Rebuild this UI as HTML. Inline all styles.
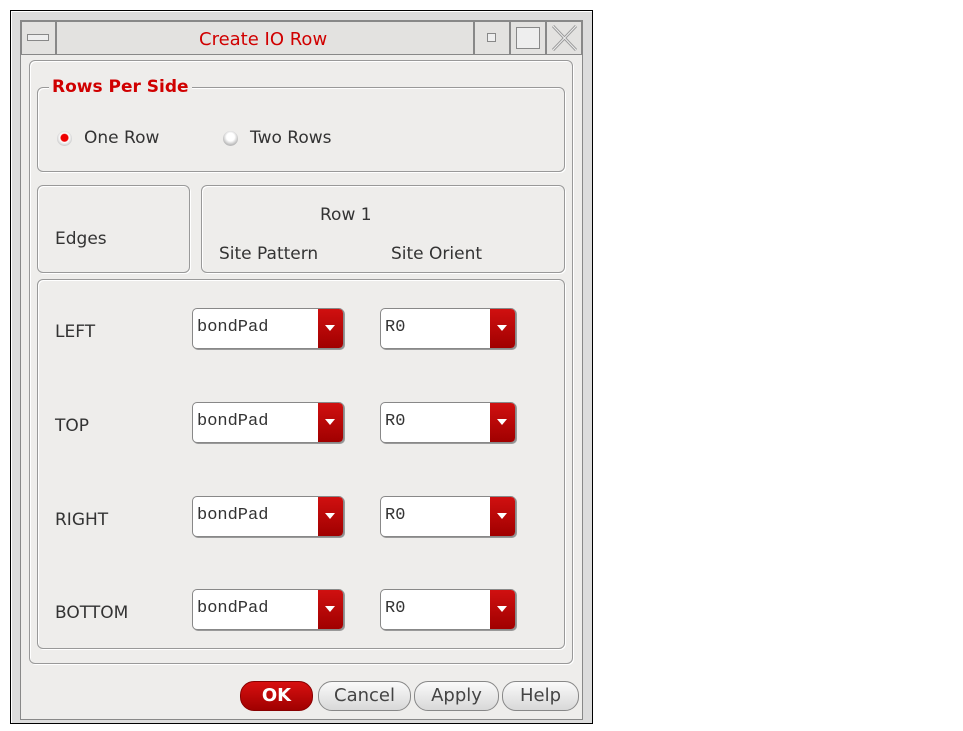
<!DOCTYPE html>
<html><head><style>
body{margin:0;width:963px;height:731px;background:#fff;position:relative;font-family:"DejaVu Sans","Liberation Sans",sans-serif;overflow:hidden}
.a{position:absolute;box-sizing:border-box}
.frame{left:10px;top:10px;width:583px;height:714px;border:1px solid #000;background:#dcdcdc;box-shadow:inset 1px 1px 0 #fff}
.win{left:20px;top:20px;width:563px;height:700px;border:1px solid #888;background:#eeedeb}
.tb{top:21px;height:34px;border:1px solid #888;background:#e3e2e0}
.box{border:1px solid #999;border-radius:6px;box-shadow:1px 1px 0 #fff, inset 1px 1px 0 #fff}
.t{position:absolute;font-size:17px;color:#333;white-space:nowrap}
.dd{position:absolute;box-sizing:border-box;height:41px;border:1px solid #888;border-radius:5px;background:#fff;box-shadow:1px 1px 0 #999;overflow:hidden}
.dd span{position:absolute;left:4px;top:9px;font-family:"Liberation Mono",monospace;font-size:17px;color:#333}
.dd i{position:absolute;right:0;top:0;width:25px;height:100%;background:linear-gradient(#d01010,#a00000)}
.dd i:after{content:"";position:absolute;left:7px;top:16px;border-left:5px solid transparent;border-right:5px solid transparent;border-top:6px solid #fff}
.btn{position:absolute;box-sizing:border-box;top:681px;height:30px;border:1px solid #888;border-radius:14px;background:linear-gradient(#fafafa,#d8d8d8);font-size:18px;color:#444;text-align:center;line-height:27px}
</style></head><body>
<div class="a frame"></div>
<div class="a win"></div>
<div class="a tb" style="left:21px;width:35px"></div>
<div class="a" style="left:27px;top:34px;width:22px;height:7px;border:1px solid #888;background:#eee"></div>
<div class="a tb" style="left:56px;width:418px"></div>
<div class="t" style="left:199px;top:29px;color:#d00000;font-size:18px">Create IO Row</div>
<div class="a tb" style="left:474px;width:36px"></div>
<div class="a" style="left:487px;top:33px;width:9px;height:9px;border:1px solid #888;background:#eee"></div>
<div class="a tb" style="left:510px;width:36px"></div>
<div class="a" style="left:516px;top:27px;width:24px;height:22px;border:1px solid #888;background:#eee"></div>
<div class="a tb" style="left:546px;width:36px"></div>
<svg class="a" style="left:546px;top:21px" width="36" height="34"><path d="M7 5L30 29M30 5L7 29" stroke="#999" stroke-width="3"/><path d="M7 5L30 29M30 5L7 29" stroke="#eee" stroke-width="1"/></svg>
<div class="a box" style="left:29px;top:60px;width:544px;height:604px"></div>
<div class="a box" style="left:37px;top:87px;width:528px;height:85px"></div>
<div class="t" style="left:49px;top:77px;color:#d00000;font-weight:bold;background:#eeedeb;padding:0 3px;font-size:17px">Rows Per Side</div>
<div class="a" style="left:57px;top:131px;width:15px;height:15px;border-radius:50%;background:radial-gradient(circle at 50% 45%,#e00 0 3.5px,#fff 4.5px,#ccc 8px)"></div>
<div class="t" style="left:84px;top:128px">One Row</div>
<div class="a" style="left:223px;top:131px;width:15px;height:15px;border-radius:50%;background:radial-gradient(circle at 50% 40%,#fff 0 4px,#bbb 8px)"></div>
<div class="t" style="left:250px;top:128px">Two Rows</div>
<div class="a box" style="left:37px;top:185px;width:153px;height:88px"></div>
<div class="t" style="left:55px;top:229px">Edges</div>
<div class="a box" style="left:201px;top:185px;width:364px;height:88px"></div>
<div class="t" style="left:320px;top:205px">Row 1</div>
<div class="t" style="left:219px;top:244px">Site Pattern</div>
<div class="t" style="left:391px;top:244px">Site Orient</div>
<div class="a box" style="left:37px;top:279px;width:528px;height:370px"></div>
<div class="t" style="left:55px;top:322px">LEFT</div>
<div class="t" style="left:55px;top:416px">TOP</div>
<div class="t" style="left:55px;top:510px">RIGHT</div>
<div class="t" style="left:55px;top:603px">BOTTOM</div>
<div class="dd" style="left:192px;top:308px;width:152px"><span>bondPad</span><i></i></div>
<div class="dd" style="left:380px;top:308px;width:136px"><span>R0</span><i></i></div>
<div class="dd" style="left:192px;top:402px;width:152px"><span>bondPad</span><i></i></div>
<div class="dd" style="left:380px;top:402px;width:136px"><span>R0</span><i></i></div>
<div class="dd" style="left:192px;top:496px;width:152px"><span>bondPad</span><i></i></div>
<div class="dd" style="left:380px;top:496px;width:136px"><span>R0</span><i></i></div>
<div class="dd" style="left:192px;top:589px;width:152px"><span>bondPad</span><i></i></div>
<div class="dd" style="left:380px;top:589px;width:136px"><span>R0</span><i></i></div>
<div class="btn" style="left:240px;width:73px;background:linear-gradient(#d81010,#a00000);color:#fff;font-weight:bold;border-color:#800">OK</div>
<div class="btn" style="left:318px;width:93px">Cancel</div>
<div class="btn" style="left:414px;width:85px">Apply</div>
<div class="btn" style="left:502px;width:77px">Help</div>
</body></html>
